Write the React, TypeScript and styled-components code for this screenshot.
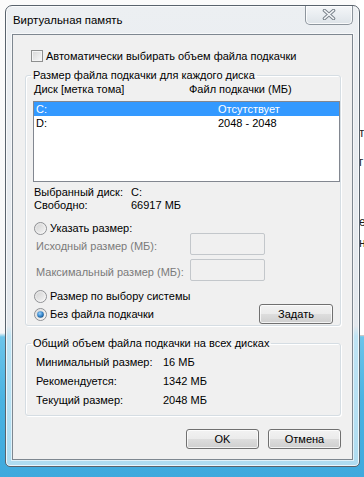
import React, { useId } from 'react';
import styled, { createGlobalStyle } from 'styled-components';

const Global = createGlobalStyle`
  html, body { margin: 0; padding: 0; }
  body {
    width: 364px;
    height: 477px;
    overflow: hidden;
    font-family: "Liberation Sans", Arial, sans-serif;
    font-size: 11px;
    color: #000;
  }
  * { box-sizing: border-box; }
`;

const Desktop = styled.div`
  position: relative;
  width: 364px;
  height: 477px;
  overflow: hidden;
  background: linear-gradient(
    to bottom,
    #fbfbfb 0px,
    #f6f7f8 333px,
    #6cc4ea 337px,
    #4ab3e2 400px,
    #3ea9dd 477px
  );
`;

const BackWindow = styled.div`
  position: absolute;
  left: 356px;
  top: 0;
  width: 40px;
  height: 336px;
  background: #fff;
  border-bottom: 1px solid #c8c8c8;
  display: flex;
  flex-direction: column;
  padding-left: 3px;
  font-size: 12px;
  color: #1e1e1e;
  overflow: hidden;
`;

const BackLine = styled.div<{ $top: number }>`
  margin-top: ${(p) => p.$top}px;
  height: 14px;
  line-height: 14px;
  white-space: nowrap;
`;

const Window = styled.div`
  position: absolute;
  left: 5px;
  top: 5px;
  width: 355px;
  height: 462px;
  border: 1px solid #59636d;
  border-radius: 7px 7px 5px 5px;
  background: linear-gradient(
    to bottom,
    #eceff2 0px,
    #e3e8ed 320px,
    #bfe4f4 330px,
    #aedcf1 100%
  );
  box-shadow: inset 0 0 0 1px rgba(255, 255, 255, 0.75);
  padding: 0 6px 6px 6px;
  display: flex;
  flex-direction: column;
  white-space: nowrap;
`;

const TitleBar = styled.div`
  height: 28px;
  display: flex;
  justify-content: space-between;
  align-items: flex-start;
`;

const Title = styled.div`
  line-height: 28px;
  padding-left: 1px;
  font-size: 11.4px;
  color: #000;
`;

const CloseButton = styled.div`
  width: 48px;
  height: 19px;
  border: 1px solid #8d959d;
  border-top: none;
  border-radius: 0 0 5px 5px;
  background: linear-gradient(to bottom, #f4f6f8 0%, #e9edf1 50%, #dde3e8 100%);
  box-shadow: inset 0 0 0 1px rgba(255, 255, 255, 0.8);
  display: flex;
  align-items: center;
  justify-content: center;
  padding-bottom: 2px;
`;

const Client = styled.div`
  flex: 1;
  border: 1px solid #7e8790;
  background: #f0f0f0;
  box-shadow: 0 0 0 1px rgba(255, 255, 255, 0.6);
  padding: 14px 11px 0 12px;
  display: flex;
  flex-direction: column;
`;

const CheckRow = styled.label`
  height: 14px;
  margin-left: 6px;
  display: flex;
  align-items: center;
  gap: 3px;
  line-height: 14px;
`;

const CheckBox = styled.span`
  width: 12px;
  height: 12px;
  border: 1px solid #8e8f8f;
  background: linear-gradient(to bottom right, #d6d6d6, #f9f9f9);
  box-shadow: inset 0 0 0 1px #f4f4f4;
`;

const Group = styled.fieldset<{ $mt: number }>`
  margin: ${(p) => p.$mt}px 0 0 0;
  width: 316px;
  border: 1px solid #d5dde3;
  border-radius: 3px;
  box-shadow: inset 1px 1px 0 #fff, 1px 1px 0 #fff;
  padding: 0 0 1px 7px;
  min-width: 0;
`;

const Legend = styled.legend`
  padding: 0 2px;
  margin-left: -2px;
  line-height: 14px;
  height: 14px;
`;

const HeaderRow = styled.div`
  height: 14px;
  line-height: 14px;
  display: grid;
  grid-template-columns: 155px 1fr;
  padding-left: 1px;
`;

const ListBox = styled.div`
  margin-top: 5px;
  width: 307px;
  height: 81px;
  border: 1px solid #828790;
  background: #fff;
`;

const ListRow = styled.div<{ $selected?: boolean }>`
  height: 14px;
  line-height: 14px;
  display: grid;
  grid-template-columns: 182px 1fr;
  padding-left: 2px;
  background: ${(p) => (p.$selected ? '#3399ff' : 'transparent')};
  color: ${(p) => (p.$selected ? '#fff' : '#000')};
`;

const InfoBlock = styled.div`
  margin-top: 4px;
  display: flex;
  flex-direction: column;
`;

const InfoRow = styled.div`
  height: 13px;
  line-height: 13px;
  display: grid;
  grid-template-columns: 97px 1fr;
  padding-left: 1px;
`;

const RadioRow = styled.label<{ $mt: number }>`
  margin-top: ${(p) => p.$mt}px;
  height: 14px;
  display: flex;
  align-items: center;
  gap: 3px;
  padding-left: 1px;
  line-height: 14px;
`;

const SizeRow = styled.div<{ $mt: number }>`
  margin-top: ${(p) => p.$mt}px;
  height: 22px;
  display: grid;
  grid-template-columns: 157px 75px;
  align-items: center;
`;

const DisabledLabel = styled.span`
  padding-left: 3px;
  padding-top: 4px;
  color: #7b7b7b;
`;

const TextBox = styled.div`
  width: 75px;
  height: 22px;
  border: 1px solid #c3c7cb;
  border-radius: 2px;
  background: #f0f0f0;
`;

const LastRow = styled.div`
  height: 20px;
  margin-top: 1px;
  display: flex;
  align-items: center;
  justify-content: space-between;
  padding-right: 7px;
`;

const InlineRadio = styled.label`
  display: flex;
  align-items: center;
  gap: 3px;
  padding-left: 1px;
  line-height: 14px;
`;

const Button = styled.button<{ $w: number }>`
  width: ${(p) => p.$w}px;
  height: 20px;
  padding: 0;
  border: 1px solid #707070;
  border-radius: 3px;
  background: linear-gradient(to bottom, #f2f2f2 0%, #ebebeb 50%, #dddddd 51%, #cfcfcf 100%);
  box-shadow: inset 0 0 0 1px rgba(255, 255, 255, 0.75);
  font-family: inherit;
  font-size: 11px;
  color: #000;
  line-height: 18px;
`;

const TotalsBody = styled.div`
  padding: 3px 0 4px 3px;
  display: flex;
  flex-direction: column;
`;

const TotalRow = styled.div`
  height: 19px;
  line-height: 19px;
  display: grid;
  grid-template-columns: 127px 1fr;
`;

const ButtonRow = styled.div`
  margin-top: 13px;
  width: 316px;
  display: flex;
  justify-content: flex-end;
  gap: 9px;
`;

function Radio({ checked }: { checked?: boolean }) {
  const id = useId().replace(/:/g, '');
  return (
    <svg width="13" height="13" viewBox="0 0 13 13">
      <defs>
        <linearGradient id={`r${id}`} x1="0" y1="0" x2="1" y2="1">
          <stop offset="0" stopColor="#cfcfcf" />
          <stop offset="1" stopColor="#f7f7f7" />
        </linearGradient>
        <radialGradient id={`b${id}`} cx="0.4" cy="0.35" r="0.7">
          <stop offset="0" stopColor="#9fd3fb" />
          <stop offset="0.55" stopColor="#3b8bd0" />
          <stop offset="1" stopColor="#124f86" />
        </radialGradient>
      </defs>
      <circle cx="6.5" cy="6.5" r="6" fill={`url(#r${id})`} stroke="#8f9194" strokeWidth="1" />
      <circle cx="6.5" cy="6.5" r="4.8" fill="none" stroke="#ffffff" strokeOpacity="0.55" strokeWidth="0.8" />
      {checked && <circle cx="6.5" cy="6.5" r="3.3" fill={`url(#b${id})`} />}
    </svg>
  );
}

function CloseGlyph() {
  return (
    <svg width="14" height="11" viewBox="0 0 14 11">
      <path d="M2.5 1.5 L11.5 9.5 M11.5 1.5 L2.5 9.5" stroke="#7a838c" strokeWidth="3.6" strokeLinecap="round" />
      <path d="M2.5 1.5 L11.5 9.5 M11.5 1.5 L2.5 9.5" stroke="#f5f7f9" strokeWidth="1.6" strokeLinecap="round" />
    </svg>
  );
}

export default function App() {
  return (
    <Desktop>
      <Global />
      <BackWindow>
        <BackLine $top={126}>ти</BackLine>
        <BackLine $top={15}>г</BackLine>
        <BackLine $top={46}>е</BackLine>
        <BackLine $top={7}>н</BackLine>
      </BackWindow>
      <Window>
        <TitleBar>
          <Title>Виртуальная память</Title>
          <CloseButton>
            <CloseGlyph />
          </CloseButton>
        </TitleBar>
        <Client>
          <CheckRow>
            <CheckBox />
            <span>Автоматически выбирать объем файла подкачки</span>
          </CheckRow>

          <Group $mt={5}>
            <Legend>Размер файла подкачки для каждого диска</Legend>
            <HeaderRow>
              <span>Диск [метка тома]</span>
              <span>Файл подкачки (МБ)</span>
            </HeaderRow>
            <ListBox>
              <ListRow $selected>
                <span>C:</span>
                <span>Отсутствует</span>
              </ListRow>
              <ListRow>
                <span>D:</span>
                <span>2048 - 2048</span>
              </ListRow>
            </ListBox>
            <InfoBlock>
              <InfoRow>
                <span>Выбранный диск:</span>
                <span>C:</span>
              </InfoRow>
              <InfoRow>
                <span>Свободно:</span>
                <span>66917 МБ</span>
              </InfoRow>
            </InfoBlock>
            <RadioRow $mt={9}>
              <Radio />
              <span>Указать размер:</span>
            </RadioRow>
            <SizeRow $mt={-2}>
              <DisabledLabel>Исходный размер (МБ):</DisabledLabel>
              <TextBox />
            </SizeRow>
            <SizeRow $mt={4}>
              <DisabledLabel>Максимальный размер (МБ):</DisabledLabel>
              <TextBox />
            </SizeRow>
            <RadioRow $mt={8}>
              <Radio />
              <span>Размер по выбору системы</span>
            </RadioRow>
            <LastRow>
              <InlineRadio>
                <Radio checked />
                <span>Без файла подкачки</span>
              </InlineRadio>
              <Button $w={74}>Задать</Button>
            </LastRow>
          </Group>

          <Group $mt={10}>
            <Legend>Общий объем файла подкачки на всех дисках</Legend>
            <TotalsBody>
              <TotalRow>
                <span>Минимальный размер:</span>
                <span>16 МБ</span>
              </TotalRow>
              <TotalRow>
                <span>Рекомендуется:</span>
                <span>1342 МБ</span>
              </TotalRow>
              <TotalRow>
                <span>Текущий размер:</span>
                <span>2048 МБ</span>
              </TotalRow>
            </TotalsBody>
          </Group>

          <ButtonRow>
            <Button $w={73}>OK</Button>
            <Button $w={73}>Отмена</Button>
          </ButtonRow>
        </Client>
      </Window>
    </Desktop>
  );
}
